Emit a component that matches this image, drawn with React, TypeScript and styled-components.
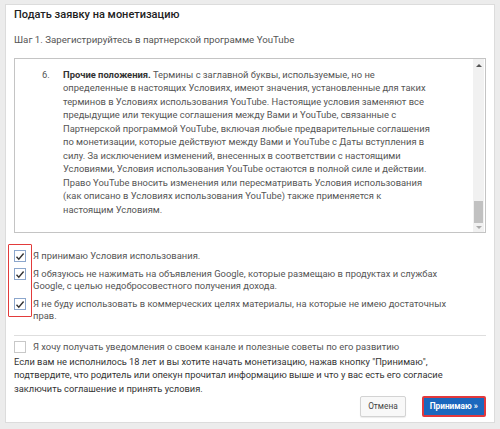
import styled, { createGlobalStyle } from "styled-components";

const GlobalStyle = createGlobalStyle`
  html, body {
    margin: 0;
    padding: 0;
    background: #ececec;
  }
  body {
    font-family: Roboto, "Liberation Sans", Arial, sans-serif;
    color: #333;
  }
`;

const Panel = styled.div`
  width: 490px;
  height: 419px;
  margin: 4px 5px;
  box-sizing: border-box;
  background: #fff;
  border: 1px solid #dcdcdc;
  padding: 2px 8px 0 8px;
  display: flex;
  flex-direction: column;
`;

const Title = styled.h1`
  margin: 0;
  font-size: 11px;
  font-weight: 500;
  color: #222;
  line-height: 16px;
`;

const Step = styled.div`
  margin-top: 10px;
  font-size: 9.7px;
  color: #555;
  line-height: 14px;
`;

const TermsBox = styled.div`
  margin-top: 11px;
  height: 175px;
  box-sizing: border-box;
  border: 1px solid #c4c4c4;
  display: flex;
`;

const TermsText = styled.div`
  flex: 1;
  padding: 9px 0 0 27px;
  display: flex;
  gap: 12px;
  font-size: 9.4px;
  line-height: 13.45px;
  color: #555;
`;

const Num = styled.span`
  flex: none;
  width: 9px;
`;

const Body = styled.p`
  margin: 0;
  white-space: nowrap;
  & b {
    color: #333;
    font-weight: 700;
  }
`;

const Scrollbar = styled.div`
  width: 11px;
  margin-right: 1px;
  background: #f1f1f1;
  display: flex;
  flex-direction: column;
  align-items: center;
  padding: 5px 0 3px;
`;

const Arrow = styled.div<{ $up?: boolean }>`
  flex: none;
  width: 0;
  height: 0;
  border-left: 3px solid transparent;
  border-right: 3px solid transparent;
  ${p => p.$up ? "border-bottom: 3px solid #555;" : "border-top: 3px solid #aaa;"}
`;

const Track = styled.div`
  flex: 1;
  width: 9px;
  display: flex;
  flex-direction: column;
  justify-content: flex-end;
  margin: 4px 0 3px;
`;

const Thumb = styled.div`
  height: 22px;
  background: #c1c1c1;
`;

const Checks = styled.div`
  position: relative;
  margin-top: 17px;
  display: flex;
  flex-direction: column;
  gap: 6px;
`;

const Highlight = styled.div`
  position: absolute;
  left: -6px;
  top: -6px;
  width: 22px;
  height: 71px;
  border: 1.5px solid #e23b3b;
  border-radius: 1px;
`;

const CheckRow = styled.label`
  display: flex;
  align-items: flex-start;
  gap: 7px;
  font-size: 9.4px;
  line-height: 12px;
  color: #555;
  white-space: nowrap;
`;

const Box = styled.span<{ $checked?: boolean }>`
  flex: none;
  width: 12px;
  height: 12px;
  box-sizing: border-box;
  border: 1px solid ${p => p.$checked ? "#8ba6cc" : "#c8c8c8"};
  background: #fff;
  display: flex;
  align-items: center;
  justify-content: center;
`;

const Divider = styled.hr`
  margin: 13px 0 5px;
  border: 0;
  border-top: 1px solid #dedede;
`;

const Notice = styled.p`
  margin: 2px 0 0;
  font-size: 9.3px;
  line-height: 13.3px;
  color: #333;
  white-space: nowrap;
`;

const Actions = styled.div`
  display: flex;
  justify-content: flex-end;
  gap: 16px;
  margin-top: 1px;
`;

const Button = styled.button<{ $primary?: boolean }>`
  height: 21px;
  padding: 0 ${p => p.$primary ? "6px" : "7px"};
  font-family: inherit;
  font-size: 8.3px;
  font-weight: ${p => p.$primary ? 700 : 400};
  color: ${p => p.$primary ? "#fff" : "#444"};
  background: ${p => p.$primary ? "#1b67bd" : "#f8f8f8"};
  border: ${p => p.$primary ? "2px solid #e2383c" : "1px solid #d3d3d3"};
  border-radius: 2px;
  box-shadow: ${p => p.$primary ? "none" : "0 1px 1px rgba(0,0,0,0.08)"};
`;

function Check({ checked }: { checked?: boolean }) {
  return (
    <Box $checked={checked}>
      {checked && (
        <svg width="10" height="9" viewBox="0 0 10 9">
          <path d="M1.5 4.8 L3.8 7.2 L8.6 1.5" fill="none" stroke="#333" strokeWidth="1.4" />
        </svg>
      )}
    </Box>
  );
}

export default function App() {
  return (
    <>
      <GlobalStyle />
      <Panel>
        <Title>Подать заявку на монетизацию</Title>
        <Step>Шаг 1. Зарегистрируйтесь в партнерской программе YouTube</Step>
        <TermsBox>
          <TermsText>
            <Num>6.</Num>
            <Body>
              <b>Прочие положения.</b> Термины с заглавной буквы, используемые, но не<br />
              определенные в настоящих Условиях, имеют значения, установленные для таких<br />
              терминов в Условиях использования YouTube. Настоящие условия заменяют все<br />
              предыдущие или текущие соглашения между Вами и YouTube, связанные с<br />
              Партнерской программой YouTube, включая любые предварительные соглашения<br />
              по монетизации, которые действуют между Вами и YouTube с Даты вступления в<br />
              силу. За исключением изменений, внесенных в соответствии с настоящими<br />
              Условиями, Условия использования YouTube остаются в полной силе и действии.<br />
              Право YouTube вносить изменения или пересматривать Условия использования<br />
              (как описано в Условиях использования YouTube) также применяется к<br />
              настоящим Условиям.
            </Body>
          </TermsText>
          <Scrollbar>
            <Arrow $up />
            <Track>
              <Thumb />
            </Track>
            <Arrow />
          </Scrollbar>
        </TermsBox>
        <Checks>
          <Highlight />
          <CheckRow>
            <Check checked />
            <span>Я принимаю Условия использования.</span>
          </CheckRow>
          <CheckRow>
            <Check checked />
            <span>
              Я обязуюсь не нажимать на объявления Google, которые размещаю в продуктах и службах<br />
              Google, с целью недобросовестного получения дохода.
            </span>
          </CheckRow>
          <CheckRow>
            <Check checked />
            <span>
              Я не буду использовать в коммерческих целях материалы, на которые не имею достаточных<br />
              прав.
            </span>
          </CheckRow>
        </Checks>
        <Divider />
        <CheckRow>
          <Check />
          <span>Я хочу получать уведомления о своем канале и полезные советы по его развитию</span>
        </CheckRow>
        <Notice>
          Если вам не исполнилось 18 лет и вы хотите начать монетизацию, нажав кнопку "Принимаю",<br />
          подтвердите, что родитель или опекун прочитал информацию выше и что у вас есть его согласие<br />
          заключить соглашение и принять условия.
        </Notice>
        <Actions>
          <Button>Отмена</Button>
          <Button $primary>Принимаю »</Button>
        </Actions>
      </Panel>
    </>
  );
}
